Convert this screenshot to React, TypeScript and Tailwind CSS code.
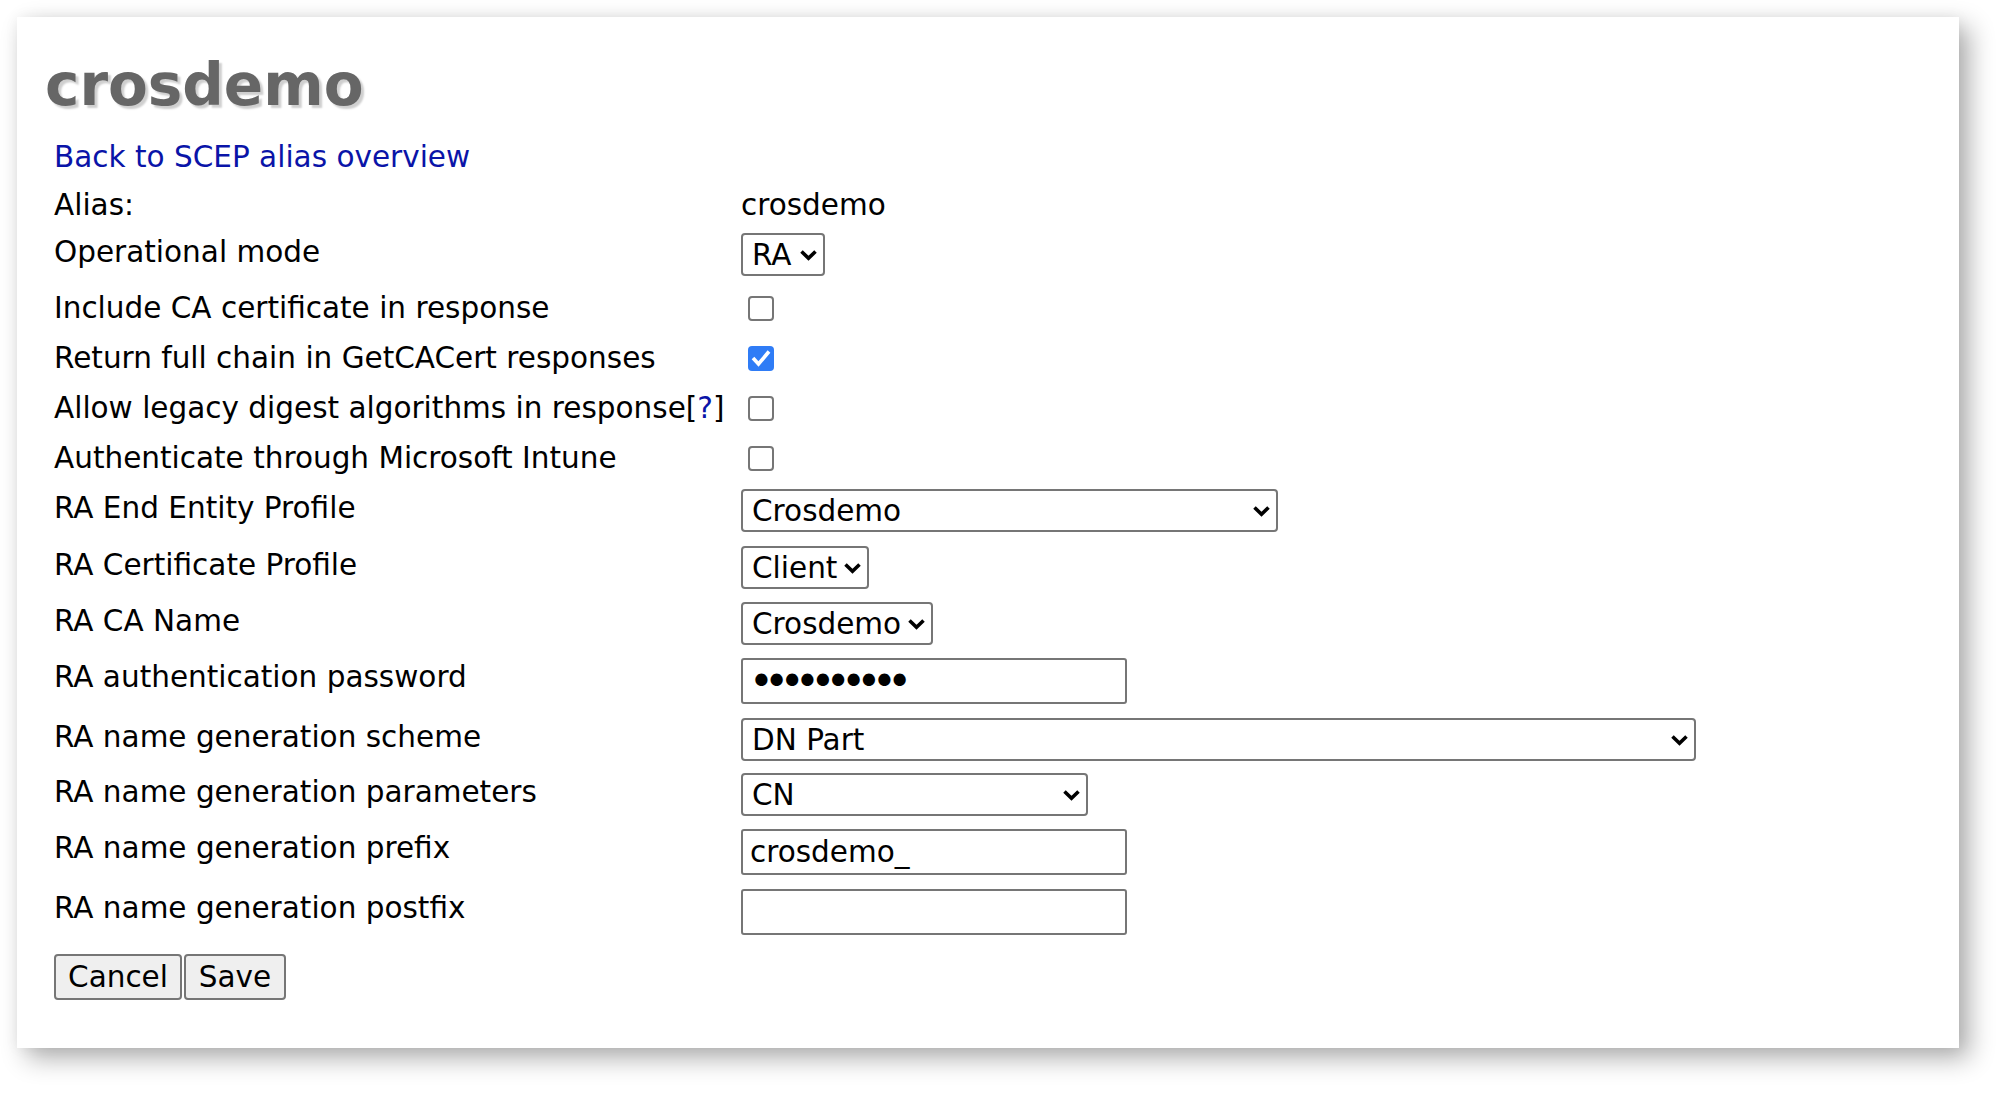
import React from 'react';

function Chevron() {
  return (
    <svg width="19" height="12" viewBox="0 0 19 12" className="pointer-events-none absolute right-[7px] top-1/2 -translate-y-1/2">
      <path d="M2.5 2.5 L9.5 9.2 L16.5 2.5" fill="none" stroke="#000" strokeWidth="3.6" strokeLinejoin="miter" />
    </svg>
  );
}

function Select({ value, width }: { value: string; width: string }) {
  return (
    <div className={`relative h-[43px] ${width}`}>
      <select
        defaultValue={value}
        className="h-full w-full appearance-none rounded-[4px] border-2 border-[#767676] bg-white pl-[9px] text-[29.5px] leading-[34px] text-black outline-none"
      >
        <option>{value}</option>
      </select>
      <Chevron />
    </div>
  );
}

function Checkbox({ checked }: { checked?: boolean }) {
  if (checked) {
    return (
      <span className="ml-[7px] mt-[7px] flex h-[25px] w-[26px] items-center justify-center rounded-[4px] bg-[#2f7cf6]">
        <svg width="26" height="25" viewBox="0 0 26 25">
          <path d="M5 12 L10.5 18 L21 5.5" fill="none" stroke="#fff" strokeWidth="3.6" />
        </svg>
      </span>
    );
  }
  return <span className="ml-[7px] mt-[7px] block h-[25px] w-[26px] rounded-[4px] border-2 border-[#767676] bg-white" />;
}

function TextInput({ value }: { value: string }) {
  return (
    <input
      type="text"
      defaultValue={value}
      className="h-[46px] w-[386px] rounded-[3px] border-2 border-[#767676] bg-white pl-[7px] text-[29.5px] leading-[34px] text-black outline-none"
    />
  );
}

function PasswordInput() {
  return (
    <input
      type="password"
      defaultValue="1234567890"
      className="h-[46px] w-[386px] rounded-[3px] border-2 border-[#767676] bg-white pl-[6px] text-[42px] leading-[40px] tracking-[-9.4px] text-black outline-none"
    />
  );
}

function Row({ label, height, children }: { label: React.ReactNode; height: string; children: React.ReactNode }) {
  return (
    <div className={`flex ${height}`}>
      <div className="w-[687px] shrink-0 pt-[2px]">{label}</div>
      <div className="flex items-start">{children}</div>
    </div>
  );
}

export default function App() {
  return (
    <div className="min-h-[1097px] bg-white pl-[17px] pt-[17px] font-['DejaVu_Sans',Verdana,sans-serif] text-[29.5px] leading-[34px] text-black">
      <div className="h-[1031px] w-[1942px] bg-white shadow-[10px_10px_24px_rgba(0,0,0,0.32),0_0_14px_rgba(0,0,0,0.05)]">
        <h1 className="ml-[28px] pt-[39px] text-[58px] font-bold leading-[59px] text-[#666] [text-shadow:3px_3px_2px_#cfcfcf]">
          crosdemo
        </h1>

        <div className="pl-[37px]">
          <a href="#" className="mt-[25px] block w-fit text-[#0a14a8]">
            Back to SCEP alias overview
          </a>

          <div className="mt-[14px] flex h-[45px]">
            <div className="w-[687px] shrink-0">Alias:</div>
            <div>crosdemo</div>
          </div>

          <Row label="Operational mode" height="h-[56px]">
            <Select value="RA" width="w-[84px]" />
          </Row>
          <Row label="Include CA certificate in response" height="h-[50px]">
            <Checkbox />
          </Row>
          <Row label="Return full chain in GetCACert responses" height="h-[50px]">
            <Checkbox checked />
          </Row>
          <Row
            label={
              <span>
                Allow legacy digest algorithms in response[<a href="#" className="text-[#0a14a8]">?</a>]
              </span>
            }
            height="h-[50px]"
          >
            <Checkbox />
          </Row>
          <Row label="Authenticate through Microsoft Intune" height="h-[50px]">
            <Checkbox />
          </Row>
          <Row label="RA End Entity Profile" height="h-[57px]">
            <Select value="Crosdemo" width="w-[537px]" />
          </Row>
          <Row label="RA Certificate Profile" height="h-[56px]">
            <Select value="Client" width="w-[128px]" />
          </Row>
          <Row label="RA CA Name" height="h-[56px]">
            <Select value="Crosdemo" width="w-[192px]" />
          </Row>
          <Row label="RA authentication password" height="h-[60px]">
            <PasswordInput />
          </Row>
          <Row label="RA name generation scheme" height="h-[55px]">
            <Select value="DN Part" width="w-[955px]" />
          </Row>
          <Row label="RA name generation parameters" height="h-[56px]">
            <Select value="CN" width="w-[347px]" />
          </Row>
          <Row label="RA name generation prefix" height="h-[60px]">
            <TextInput value="crosdemo_" />
          </Row>
          <Row label="RA name generation postfix" height="h-[65px]">
            <TextInput value="" />
          </Row>

          <div className="flex gap-[2px]">
            <button className="h-[46px] w-[128px] rounded-[4px] border-2 border-[#767676] bg-[#efefef] text-[29.5px] leading-[34px]">
              Cancel
            </button>
            <button className="h-[46px] w-[102px] rounded-[4px] border-2 border-[#767676] bg-[#efefef] text-[29.5px] leading-[34px]">
              Save
            </button>
          </div>
        </div>
      </div>
    </div>
  );
}
